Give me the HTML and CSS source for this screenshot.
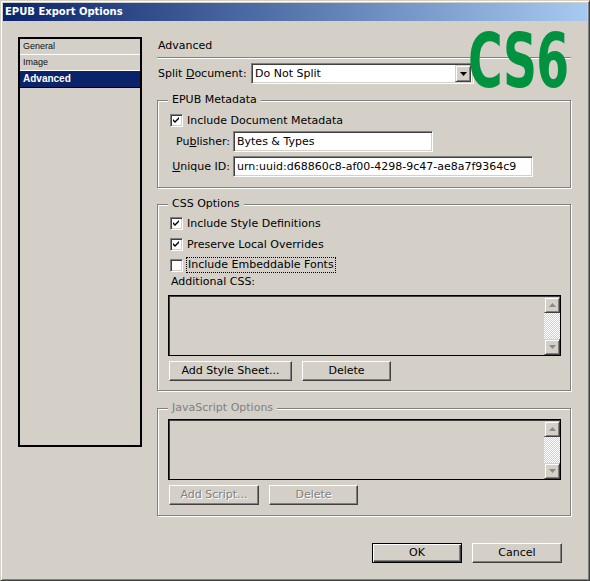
FILE: index.html
```html
<!DOCTYPE html>
<html>
<head>
<meta charset="utf-8">
<title>EPUB Export Options</title>
<link rel="stylesheet" href="styles.css">
</head>
<body>
<div class="window">
  <div class="titlebar">EPUB Export Options</div>
  <div class="client">
    <ul class="nav">
      <li>General</li>
      <li>Image</li>
      <li class="sel">Advanced</li>
    </ul>
    <div class="panel">
      <div class="heading">Advanced</div>
      <div class="split-row">
        <span class="split-label">Split <u>D</u>ocument:</span>
        <div class="select">
          <span>Do Not Split</span>
          <span class="drop-btn"><svg width="7" height="4" viewBox="0 0 7 4"><path d="M0 0H7L3.5 4Z" fill="#000"/></svg></span>
        </div>
      </div>

      <fieldset class="group">
        <legend>EPUB Metadata</legend>
        <div class="check-row first">
          <span class="cb"><svg width="7" height="7" viewBox="0 0 7 7"><path d="M0 2L2 4L6 0V2L2 6L0 4Z" fill="#000"/></svg></span>
          <span>Include Document Metadata</span>
        </div>
        <div class="field-row">
          <span class="field-label">Pu<u>b</u>lisher:</span>
          <div class="text-input w200">Bytes &amp; Types</div>
        </div>
        <div class="field-row">
          <span class="field-label"><u>U</u>nique ID:</span>
          <div class="text-input w300">urn:uuid:d68860c8-af00-4298-9c47-ae8a7f9364c9</div>
        </div>
      </fieldset>

      <fieldset class="group css">
        <legend>CSS Options</legend>
        <div class="check-row first">
          <span class="cb"><svg width="7" height="7" viewBox="0 0 7 7"><path d="M0 2L2 4L6 0V2L2 6L0 4Z" fill="#000"/></svg></span>
          <span>Include Style Definitions</span>
        </div>
        <div class="check-row">
          <span class="cb"><svg width="7" height="7" viewBox="0 0 7 7"><path d="M0 2L2 4L6 0V2L2 6L0 4Z" fill="#000"/></svg></span>
          <span>Preserve Local Overrides</span>
        </div>
        <div class="check-row">
          <span class="cb"></span>
          <span class="focus">Include Embeddable Fonts</span>
        </div>
        <div class="sub-label">Additional CSS:</div>
        <div class="listbox">
          <div class="scrollbar">
            <span class="sb-btn"><svg width="7" height="4" viewBox="0 0 7 4"><path d="M3.5 0L7 4H0Z" fill="#8a8a8a"/></svg></span>
            <span class="sb-track"></span>
            <span class="sb-btn"><svg width="7" height="4" viewBox="0 0 7 4"><path d="M0 0H7L3.5 4Z" fill="#8a8a8a"/></svg></span>
          </div>
        </div>
        <div class="btn-row">
          <button class="btn w123">Add Style Sheet...</button>
          <button class="btn w89">Delete</button>
        </div>
      </fieldset>

      <fieldset class="group js">
        <legend class="dim">JavaScript Options</legend>
        <div class="listbox">
          <div class="scrollbar">
            <span class="sb-btn"><svg width="7" height="4" viewBox="0 0 7 4"><path d="M3.5 0L7 4H0Z" fill="#8a8a8a"/></svg></span>
            <span class="sb-track"></span>
            <span class="sb-btn"><svg width="7" height="4" viewBox="0 0 7 4"><path d="M0 0H7L3.5 4Z" fill="#8a8a8a"/></svg></span>
          </div>
        </div>
        <div class="btn-row">
          <button class="btn disabled w90">Add Script...</button>
          <button class="btn disabled w89">Delete</button>
        </div>
      </fieldset>

      <div class="footer">
        <button class="btn default w90">OK</button>
        <button class="btn w90">Cancel</button>
      </div>
    </div>
  </div>
  <div class="logo">CS6</div>
</div>
</body>
</html>
```

FILE: styles.css
```css
html, body {
  margin: 0;
  padding: 0;
  background: #d4d0c8;
}

.window {
  position: relative;
  width: 590px;
  height: 581px;
  box-sizing: border-box;
  border: 1px solid;
  border-color: #d4d0c8 #404040 #404040 #d4d0c8;
  box-shadow: inset 1px 1px 0 #fff, inset -1px -1px 0 #808080;
  padding: 2px;
  background: #d4d0c8;
  font-family: "DejaVu Sans", Verdana, sans-serif;
  font-size: 11px;
  color: #000;
  overflow: hidden;
}

.titlebar {
  height: 18px;
  line-height: 18px;
  padding-left: 2px;
  background: linear-gradient(to right, #0a246a, #a6caf0);
  color: #fff;
  font-weight: bold;
  font-size: 10px;
}

.client {
  display: flex;
  gap: 15px;
  padding: 16px 0 0 15px;
}

.nav {
  list-style: none;
  margin: 0;
  padding: 0;
  width: 124px;
  height: 410px;
  box-sizing: border-box;
  border: 2px solid #000;
  font-family: "Liberation Sans", Arial, sans-serif;
  font-size: 9px;
}

.nav li {
  height: 15px;
  line-height: 15px;
  padding-left: 3px;
  border-bottom: 1px solid #fff;
  color: #111;
}

.nav li.sel {
  height: 16px;
  line-height: 16px;
  border-bottom: 1px solid #000;
  background: #0a246a;
  color: #fff;
  font-weight: bold;
  font-size: 10px;
}

.panel {
  width: 414px;
  display: flex;
  flex-direction: column;
}

.heading {
  line-height: 14px;
  padding: 2px 0 4px 1px;
  border-bottom: 1px solid #808080;
  box-shadow: 0 1px 0 #fff;
}

.split-row {
  display: flex;
  align-items: center;
  margin-top: 5px;
  height: 21px;
}

.split-label {
  width: 94px;
  padding-left: 1px;
  box-sizing: border-box;
}

.select,
.text-input {
  box-sizing: border-box;
  height: 21px;
  background: #fff;
  border: 1px solid;
  border-color: #808080 #fff #fff #808080;
  box-shadow: inset 1px 1px 0 #404040, inset -1px -1px 0 #d4d0c8;
  display: flex;
  align-items: center;
  padding-left: 3px;
  white-space: nowrap;
}

.select {
  width: 223px;
  justify-content: space-between;
  padding-right: 2px;
}

.drop-btn {
  width: 16px;
  height: 17px;
  box-sizing: border-box;
  background: #d4d0c8;
  border: 1px solid;
  border-color: #d4d0c8 #404040 #404040 #d4d0c8;
  box-shadow: inset 1px 1px 0 #fff, inset -1px -1px 0 #808080;
  display: flex;
  align-items: center;
  justify-content: center;
}

.group {
  margin: 9px 0 0;
  padding: 6px 9px 10px 10px;
  border: 1px solid #808080;
  box-shadow: inset 1px 1px 0 #fff, 1px 1px 0 #fff;
  min-width: 0;
  width: 414px;
  box-sizing: border-box;
}

.group legend {
  padding: 0 4px;
  line-height: 14px;
  background: #d4d0c8;
}

.group legend.dim {
  color: #808080;
}

.group.css {
  padding-top: 5px;
  padding-bottom: 9px;
}

.group.js {
  margin-top: 10px;
  padding-top: 4px;
  padding-bottom: 10px;
}

.check-row {
  display: flex;
  align-items: center;
  gap: 4px;
  height: 14px;
  margin-left: 2px;
  margin-top: 7px;
}

.check-row.first {
  margin-top: 0;
}

.cb {
  width: 13px;
  height: 13px;
  box-sizing: border-box;
  background: #fff;
  border: 1px solid;
  border-color: #808080 #fff #fff #808080;
  box-shadow: inset 1px 1px 0 #404040, inset -1px -1px 0 #d4d0c8;
  display: flex;
  align-items: center;
  justify-content: center;
  flex: none;
}

.focus {
  outline: 1px dotted #000;
  padding: 0 1px;
  line-height: 14px;
}

.field-row {
  display: flex;
  align-items: center;
  gap: 3px;
  margin-top: 4px;
}

.field-label {
  width: 62px;
  text-align: right;
}

.w200 { width: 200px; }
.w300 { width: 300px; }

.sub-label {
  margin: 3px 0 0 3px;
  line-height: 14px;
}

.listbox {
  margin-top: 6px;
  width: 393px;
  height: 61px;
  box-sizing: border-box;
  border: 1px solid #000;
  box-shadow: inset 1px 1px 0 #404040;
  display: flex;
  justify-content: flex-end;
  padding: 1px 0 0;
}

.group.js .listbox {
  margin-top: 0;
}

.scrollbar {
  width: 16px;
  display: flex;
  flex-direction: column;
}

.sb-btn {
  height: 16px;
  box-sizing: border-box;
  background: #d4d0c8;
  border: 1px solid;
  border-color: #d4d0c8 #404040 #404040 #d4d0c8;
  box-shadow: inset 1px 1px 0 #fff, inset -1px -1px 0 #808080;
  display: flex;
  align-items: center;
  justify-content: center;
  flex: none;
}

.sb-track {
  flex: 1;
  background: repeating-conic-gradient(#fff 0 25%, #d4d0c8 0 50%) 0 0 / 2px 2px;
}

.btn-row {
  display: flex;
  gap: 10px;
  margin: 5px 0 0 1px;
}

.btn {
  height: 20px;
  box-sizing: border-box;
  padding: 0;
  margin: 0;
  background: #d4d0c8;
  border: 1px solid;
  border-color: #fff #404040 #404040 #fff;
  box-shadow: inset -1px -1px 0 #808080;
  font-family: "DejaVu Sans", Verdana, sans-serif;
  font-size: 11px;
  color: #000;
  line-height: 16px;
  white-space: nowrap;
}

.btn.disabled {
  color: #808080;
  text-shadow: 1px 1px 0 #fff;
}

.btn.default {
  border: 1px solid #000;
  box-shadow: inset 1px 1px 0 #fff, inset -1px -1px 0 #404040, inset -2px -2px 0 #808080;
}

.w123 { width: 123px; }
.w89 { width: 89px; }
.w90 { width: 90px; }

.footer {
  display: flex;
  justify-content: flex-end;
  gap: 10px;
  margin-top: 27px;
  padding-right: 9px;
}

.logo {
  position: absolute;
  left: 467px;
  top: 23px;
  font-family: "DejaVu Sans", sans-serif;
  font-stretch: condensed;
  font-weight: bold;
  font-size: 75px;
  line-height: 75px;
  color: #00923f;
  transform: scaleX(0.7);
  transform-origin: left top;
  letter-spacing: -1px;
}
```
